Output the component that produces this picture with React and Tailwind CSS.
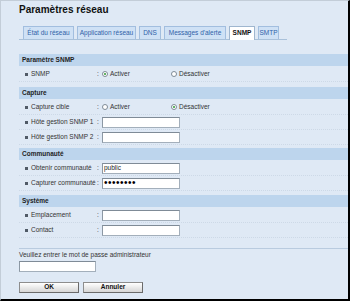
import React from "react";

const tabs = [
  { label: "État du réseau", w: "w-[51px]" },
  { label: "Application réseau", w: "w-[59px]" },
  { label: "DNS", w: "w-[22px]" },
  { label: "Messages d'alerte", w: "w-[62px]" },
  { label: "SNMP", w: "w-[26px]", active: true },
  { label: "SMTP", w: "w-[21px]" },
];

const Radio = ({ checked }) => (
  <span className="w-[6px] h-[6px] rounded-full border border-[#808c98] bg-white flex items-center justify-center shrink-0">
    {checked && <span className="w-[2px] h-[2px] rounded-full bg-[#2f9a35]" />}
  </span>
);

const TextBox = ({ children, className = "w-[78px]" }) => (
  <div className={`${className} h-[11px] bg-white border border-[#a3afbb] border-t-[#7f8b97] border-l-[#8c98a4] flex items-center px-[1px] text-[#222]`}>
    {children}
  </div>
);

const Row = ({ label, children }) => (
  <div className="flex items-center h-[15px] pl-[6px] border-b border-dotted border-[#cdd9e7]">
    <span className="w-[3px] h-[3px] bg-[#505a66] shrink-0" />
    <span className="ml-[3px] w-[66px] text-[#333]">{label}</span>
    <span className="w-[5px] text-[#333]">:</span>
    {children}
  </div>
);

const Section = ({ title, className = "", children }) => (
  <div className={className}>
    <div className="h-[12px] flex items-center pl-[3px] bg-[#bdd5ed] font-bold text-[#1e1e1e]">
      {title}
    </div>
    <div className="mt-[1px]">{children}</div>
  </div>
);

const Choice = ({ activeOn }) => (
  <div className="flex items-center">
    <div className="flex items-center w-[69px]">
      <Radio checked={activeOn} />
      <span className="ml-[2px] text-[#333]">Activer</span>
    </div>
    <div className="flex items-center">
      <Radio checked={!activeOn} />
      <span className="ml-[2px] text-[#333]">Désactiver</span>
    </div>
  </div>
);

export default function App() {
  return (
    <div className="w-[350px] h-[301px] overflow-hidden bg-[#dfe9f5] border-l border-t border-r-2 border-b-2 border-l-[#c3cdd8] border-t-[#c3cdd8] border-r-black border-b-black font-['Liberation_Sans',Arial,sans-serif] text-[6.5px] leading-none">
      <div className="pt-[3px] pl-[18px]">
        {/* Title */}
        <h1 className="text-[10px] font-bold leading-[12px] text-[#111]">Paramètres réseau</h1>

        {/* Tabs */}
        <div className="mt-[10px] w-[268px] h-[14px] flex items-end gap-[3px] pl-[4px] border-b border-[#a9c1da]">
          {tabs.map((t) => (
            <div
              key={t.label}
              className={
                t.active
                  ? `${t.w} h-[14px] -mb-[1px] flex items-center justify-center bg-white border border-b-0 border-[#9fb6cf] font-bold text-[#111]`
                  : `${t.w} h-[13px] flex items-center justify-center bg-[#cfe1f5] border border-b-0 border-[#a2bedf] text-[#2f62a8]`
              }
            >
              {t.label}
            </div>
          ))}
        </div>

        {/* Sections */}
        <Section title="Paramètre SNMP" className="mt-[14px]">
          <Row label="SNMP">
            <Choice activeOn />
          </Row>
        </Section>

        <Section title="Capture" className="mt-[5px]">
          <Row label="Capture cible">
            <Choice activeOn={false} />
          </Row>
          <Row label="Hôte gestion SNMP 1">
            <TextBox />
          </Row>
          <Row label="Hôte gestion SNMP 2">
            <TextBox />
          </Row>
        </Section>

        <Section title="Communauté" className="mt-[3px]">
          <Row label="Obtenir communauté">
            <TextBox>public</TextBox>
          </Row>
          <Row label="Capturer communauté">
            <TextBox>
              <span className="text-[10px] leading-none tracking-[0.5px] text-black">••••••••</span>
            </TextBox>
          </Row>
        </Section>

        <Section title="Système" className="mt-[4px]">
          <Row label="Emplacement">
            <TextBox />
          </Row>
          <Row label="Contact">
            <TextBox />
          </Row>
        </Section>

        {/* Password */}
        <div className="mt-[10px] border-t border-[#b9cbdf]">
          <div className="mt-[2px] h-[8px] flex items-center text-[#333]">
            Veuillez entrer le mot de passe administrateur
          </div>
          <div className="mt-[2px]">
            <TextBox className="w-[77px]" />
          </div>
          <div className="mt-[10px] flex gap-[4px]">
            <button className="w-[60px] h-[11px] flex items-center justify-center bg-gradient-to-b from-white to-[#d6d6d6] border border-[#8d8d8d] border-b-[#6a6a6a] border-r-[#6a6a6a] font-bold text-[#111]">
              OK
            </button>
            <button className="w-[60px] h-[11px] flex items-center justify-center bg-gradient-to-b from-white to-[#d6d6d6] border border-[#8d8d8d] border-b-[#6a6a6a] border-r-[#6a6a6a] font-bold text-[#111]">
              Annuler
            </button>
          </div>
        </div>
      </div>
    </div>
  );
}
